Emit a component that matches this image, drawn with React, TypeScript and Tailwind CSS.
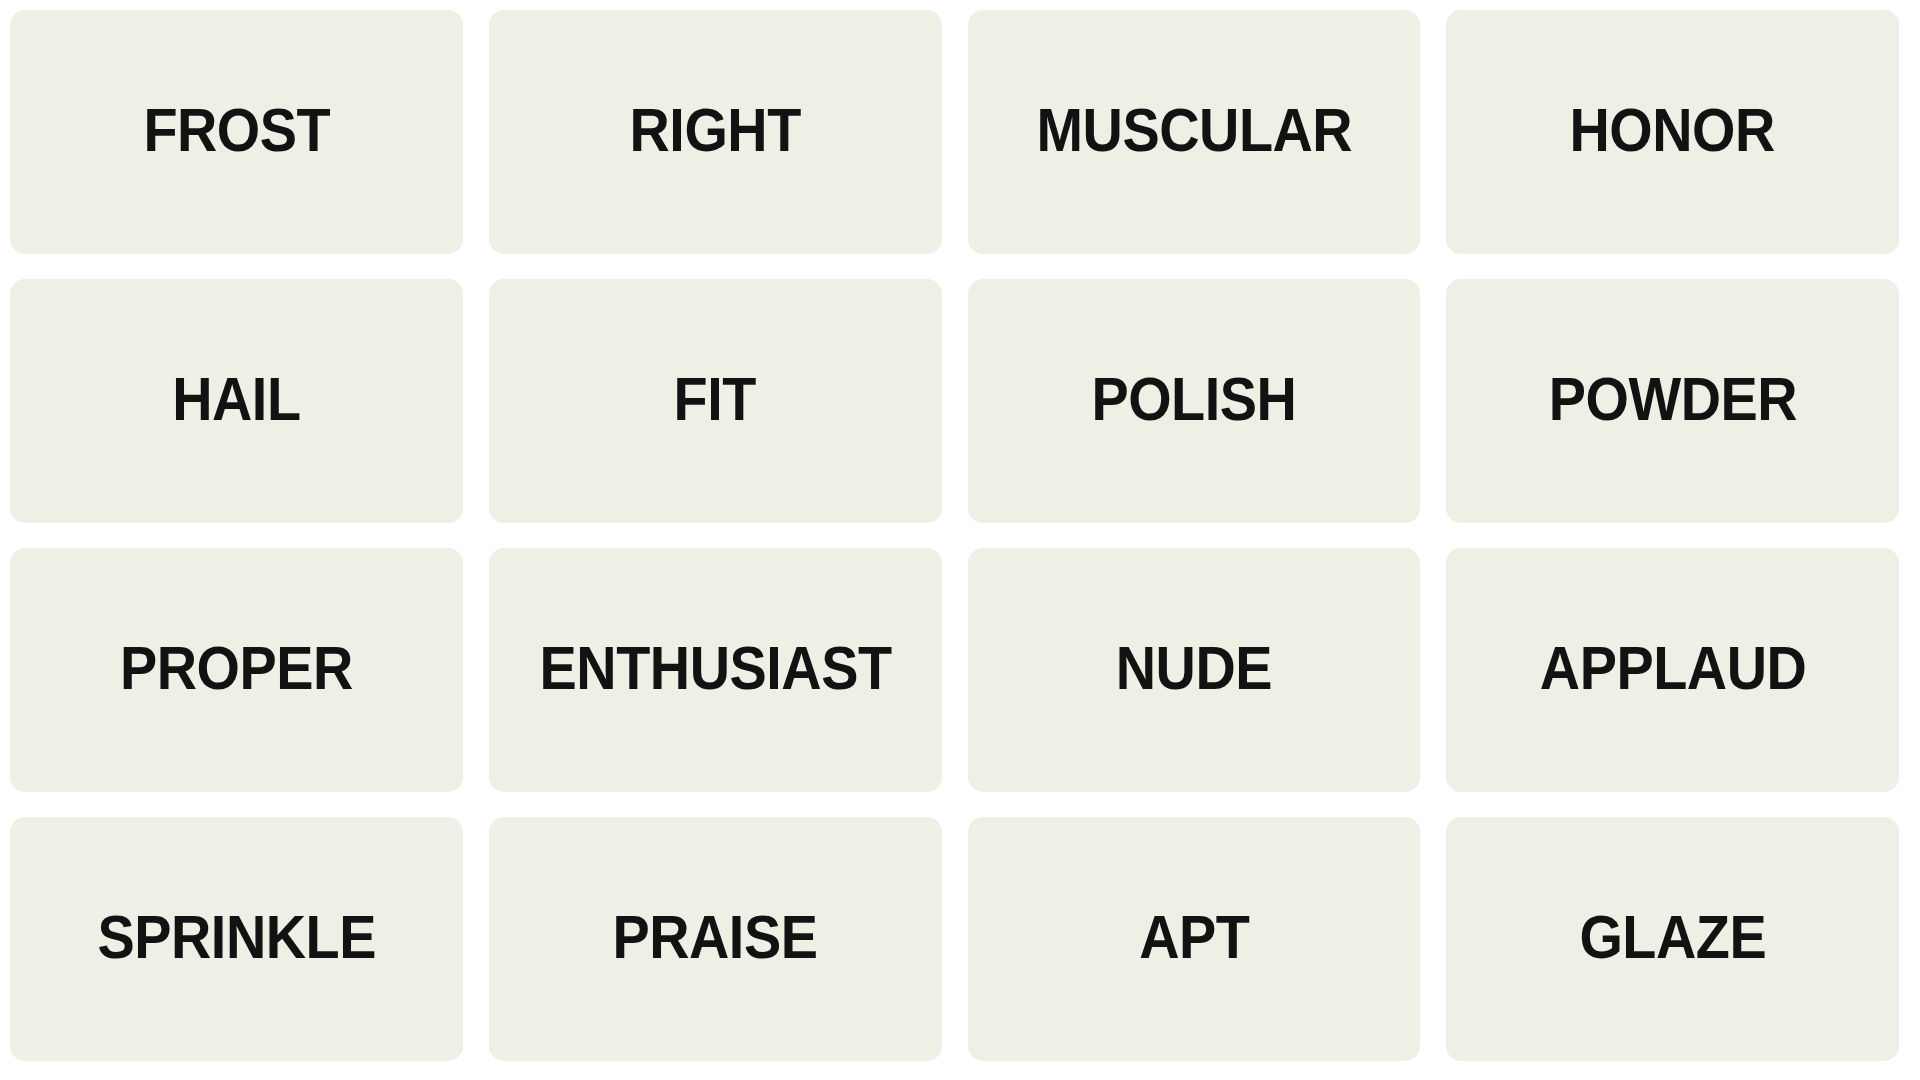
import React from 'react';

const words: string[] = [
  'FROST', 'RIGHT', 'MUSCULAR', 'HONOR',
  'HAIL', 'FIT', 'POLISH', 'POWDER',
  'PROPER', 'ENTHUSIAST', 'NUDE', 'APPLAUD',
  'SPRINKLE', 'PRAISE', 'APT', 'GLAZE',
];

const Tile: React.FC<{ word: string }> = ({ word }) => (
  <div className="h-[244px] rounded-[15px] bg-[#efefe6] flex items-center justify-center pb-[5px]">
    <span className="inline-block scale-x-[0.9] text-[62px] font-bold text-[#121212] leading-none tracking-[-0.5px] [font-family:'Liberation_Sans',Arial,sans-serif]">
      {word}
    </span>
  </div>
);

const App: React.FC = () => {
  return (
    <div className="w-[1920px] h-[1080px] bg-white pl-[10px] pr-[21px] pt-[10px]">
      <div className="grid grid-cols-4 gap-x-[26px] gap-y-[25px]">
        {words.map((w) => (
          <Tile key={w} word={w} />
        ))}
      </div>
    </div>
  );
};

export default App;
